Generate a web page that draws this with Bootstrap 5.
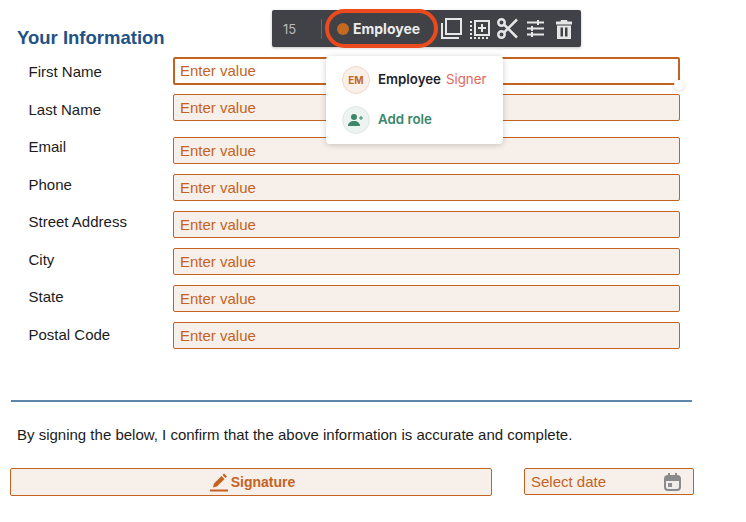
<!DOCTYPE html>
<html lang="en">
<head>
    <meta charset="UTF-8">
    <meta name="viewport" content="width=device-width, initial-scale=1.0">
    <link href="https://cdn.jsdelivr.net/npm/bootstrap@5.3.3/dist/css/bootstrap.min.css" rel="stylesheet">
    <title>Your Information</title>
    <style>
        html, body { height: 522px; overflow: hidden; }
        body { font-family: "Liberation Sans", Arial, sans-serif; color: #1b1b1b; background: #fff; }
        .doc-page { position: relative; width: 746px; height: 522px; padding: 27px 0 0 0; }
        .doc-title { font-size: 18.5px; font-weight: 700; line-height: 21px; color: #1f5286; margin: 0 0 0 17px; }
        .field-area { padding: 9px 0 0 28.5px; height: 352px; }
        .label-col { width: 144.5px; flex: none; font-size: 15px; padding-top: 5px; }
        .label-col div { height: 37.5px; line-height: 20px; }
        .input-col { width: 507px; flex: none; }
        .tag-input.form-control { height: 27px; min-height: 0; padding: 0 6px; border: 1px solid #c4631f; border-radius: 2px; background: #f7efe9; font-size: 15px; line-height: 25px; color: #c4631f; margin-bottom: 10px; box-shadow: none; }
        .tag-input.form-control::placeholder { color: #c4631f; opacity: 1; }
        .tag-input.first-input { height: 28px; background: #fff; border-width: 2px; padding: 0 5px 1px; margin-bottom: 9px; }
        .tag-input.second-input { margin-bottom: 16px; }
        .tag-input.date-input { width: 100%; height: 25px; border: 0; background: transparent; padding: 0; margin: 0; }
        .rule-line { height: 2px; width: 681px; margin: 0 0 0 11px; background: #5d86aa; opacity: 1; border: 0; }
        .confirm-text { font-size: 15px; line-height: 20px; margin: 23px 0 23px 17px; }
        .sign-row { padding-left: 10px; }
        .sign-btn.btn { width: 482px; height: 28px; padding: 0 0 0 3px; gap: 3px; border: 1px solid #c4631f; border-radius: 2px; background: #f7efe9; color: #c4631f; font-size: 14px; font-weight: 700; }
        .date-box { width: 170px; height: 27px; margin-left: 32px; padding: 0 12px 0 6px; border: 1px solid #c4631f; border-radius: 2px; background: #f7efe9; }
        .tool-bar { position: absolute; left: 272px; top: 10px; width: 309px; height: 37px; background: #414247; border-radius: 2px; color: #e6e6e6; font-family: Inter, "Liberation Sans", sans-serif; box-shadow: 0 1px 3px rgba(0,0,0,.25); }
        .tool-num { width: 50px; padding-left: 11px; font-size: 13px; color: #b9b9bc; border-right: 1px solid #66676c; height: 20px; line-height: 20px; flex: none; }
        .role-pill { position: absolute; left: 53px; top: -1px; width: 113px; height: 39px; padding-left: 8px; border: 4px solid #ea4a1c; border-radius: 20px; font-size: 14px; font-weight: 700; color: #ececec; }
        .role-dot { width: 12px; height: 12px; border-radius: 50%; background: #c4691f; margin-right: 4px; flex: none; }
        .tool-icon { position: absolute; top: 8px; }
        .role-menu { position: absolute; left: 326px; top: 56px; width: 177px; height: 88px; padding: 10px 0 0 16px; background: #fff; border-radius: 4px; font-family: Inter, "Liberation Sans", sans-serif; font-size: 13.3px; box-shadow: 0 1px 6px rgba(0,0,0,.2); }
        .role-row { height: 40px; }
        .role-avatar { width: 28px; height: 28px; margin-right: 8px; border-radius: 50%; flex: none; font-size: 10px; font-weight: 700; }
        .avatar-em { background: #f9f0ea; border: 1px solid #f0d9ca; color: #c4691f; }
        .avatar-add { background: #edf3f0; border: 1px solid #dfe8e4; }
        .role-line { margin-top: 3px; line-height: 20px; }
        .role-name { font-weight: 600; color: #22232a; margin-right: 5px; }
        .role-kind { color: #e2665c; }
        .role-add { font-weight: 600; color: #3b8668; }
        .resize-dot { position: absolute; left: 674px; top: 80px; width: 10px; height: 10px; border-radius: 50%; background: #fff; box-shadow: 0 1px 4px rgba(0,0,0,.15); }
    </style>
</head>
<body>

    <div class="doc-page">

        <h1 class="doc-title">Your Information</h1>

        <div class="field-area d-flex">
            <div class="label-col">
                <div>First Name</div>
                <div>Last Name</div>
                <div>Email</div>
                <div>Phone</div>
                <div>Street Address</div>
                <div>City</div>
                <div>State</div>
                <div>Postal Code</div>
            </div>
            <div class="input-col">
                <input class="form-control tag-input first-input" type="text" placeholder="Enter value">
                <input class="form-control tag-input second-input" type="text" placeholder="Enter value">
                <input class="form-control tag-input" type="text" placeholder="Enter value">
                <input class="form-control tag-input" type="text" placeholder="Enter value">
                <input class="form-control tag-input" type="text" placeholder="Enter value">
                <input class="form-control tag-input" type="text" placeholder="Enter value">
                <input class="form-control tag-input" type="text" placeholder="Enter value">
                <input class="form-control tag-input" type="text" placeholder="Enter value">
            </div>
        </div>

        <hr class="rule-line">
        <p class="confirm-text">By signing the below, I confirm that the above information is accurate and complete.</p>

        <div class="sign-row d-flex align-items-start">
            <button type="button" class="btn sign-btn d-flex align-items-center justify-content-center">
                <svg width="18" height="19" viewBox="0 0 18 19"><path fill="#c4631f" d="M0 16.500h18V18.500H0zM3 14.500l1-4 7.500-7.500 3 3-7.500 7.500zM12.500 2l1.500-1.500 3 3L15.500 5z"/></svg>
                Signature
            </button>
            <div class="date-box d-flex align-items-center">
                <input class="form-control tag-input date-input" type="text" placeholder="Select date">
                <svg class="flex-shrink-0" width="17" height="18" viewBox="0 0 17 18"><rect x="1" y="3" width="15" height="14" rx="3" fill="#f1ece8" stroke="#8a8a8a" stroke-width="2"/><path fill="#8a8a8a" d="M1 4h15v4H1zM4 0h2v3H4zM11 0h2v3h-2z"/><rect x="4" y="10" width="4" height="4" fill="#8f8f8f"/></svg>
            </div>
        </div>

        <div class="resize-dot"></div>

        <div class="tool-bar d-flex align-items-center">
            <div class="tool-num">15</div>
            <div class="role-pill d-flex align-items-center"><span class="role-dot"></span>Employee</div>
            <!-- copy -->
            <svg class="tool-icon" style="left:169px" width="21" height="21" viewBox="0 0 21 21" fill="none" stroke="#e6e6e6" stroke-width="2"><path d="M5 1h15v15H5z"/><path d="M1 5v15h17"/></svg>
            <!-- add in dashed box -->
            <svg class="tool-icon" style="left:197px" width="21" height="21" viewBox="0 0 21 21" fill="none" stroke="#e6e6e6" stroke-width="2"><path d="M6 3h14v14H6z"/><path d="M13 6v8M9 10h8"/><path stroke-dasharray="2 2" d="M2 3v17h18"/></svg>
            <!-- scissors -->
            <svg class="tool-icon" style="left:225px" width="21" height="21" viewBox="0 0 21 21" fill="none" stroke="#e6e6e6" stroke-width="2.500"><circle cx="4.500" cy="4.500" r="3.200"/><circle cx="4.500" cy="16.500" r="3.200"/><path d="M7 6.500 20 19.500M7 14.500 20 1.500"/></svg>
            <!-- sliders -->
            <svg class="tool-icon" style="left:255px" width="17" height="21" viewBox="0 0 17 21" fill="none" stroke="#e6e6e6" stroke-width="2"><path d="M0 4.500h17M0 10.500h17M0 16.500h17"/><path d="M11 2v5M5 8v5M5 14v5"/></svg>
            <!-- trash -->
            <svg class="tool-icon" style="left:284px" width="16" height="21" viewBox="0 0 16 21"><path fill="#e6e6e6" fill-rule="evenodd" d="M5 2h6l.5 1.500H16V6.500H0V3.500h4.500zM1 7.500h14V21H1zM4.500 9.500v9h2.500v-9zM9 9.500v9h2.500v-9z"/></svg>
        </div>

        <div class="role-menu">
            <div class="role-row d-flex align-items-start">
                <span class="role-avatar avatar-em d-flex align-items-center justify-content-center">EM</span>
                <span class="role-name role-line">Employee</span><span class="role-kind role-line">Signer</span>
            </div>
            <div class="role-row d-flex align-items-start">
                <span class="role-avatar avatar-add d-flex align-items-center justify-content-center">
                    <svg width="16" height="12" viewBox="0 0 16 12"><path fill="#3b8668" d="M6 0a3 3 0 1 1 0 6 3 3 0 0 1 0-6zM0 12c0-3 2.500-5 6-5s6 2 6 5zM12.500 2h1v1.500H15v1h-1.500V6h-1V4.500H11v-1h1.500z"/></svg>
                </span>
                <span class="role-add role-line">Add role</span>
            </div>
        </div>

    </div>

</body>
<script src="https://cdn.jsdelivr.net/npm/bootstrap@5.3.3/dist/js/bootstrap.bundle.min.js"></script>
</html>
